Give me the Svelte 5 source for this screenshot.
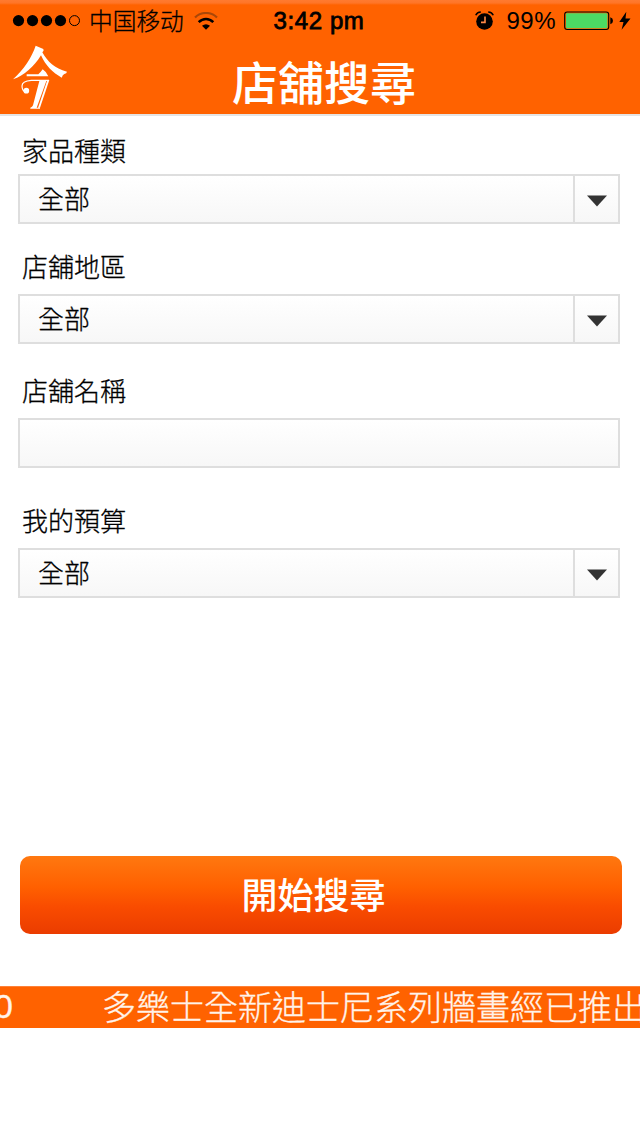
<script>
  const fields = [
    { label: '家品種類', value: '全部', select: true },
    { label: '店舖地區', value: '全部', select: true },
    { label: '店舖名稱', value: '', select: false },
    { label: '我的預算', value: '全部', select: true }
  ];
</script>

<div class="screen">
  <header>
    <div class="status">
      <div class="left">
        <svg class="dots" width="70" height="14" viewBox="0 0 70 14">
          <circle cx="6.5" cy="6.6" r="5.6" /><circle cx="20.5" cy="6.6" r="5.6" />
          <circle cx="34.5" cy="6.6" r="5.6" /><circle cx="48.5" cy="6.6" r="5.6" />
          <circle cx="62.5" cy="6.6" r="5" fill="none" stroke="#000" />
        </svg>
        <span class="carrier">中国移动</span>
        <svg class="wifi" width="24" height="19" viewBox="0 0 24 19" fill="none">
          <path d="M1 5.5C7-.5 17-.5 23 5.5" stroke="#a94708" stroke-width="2.2" />
          <path d="M4.7 10.2C9 5.8 15 5.8 19.3 10.2" stroke="#000" stroke-width="2.5" />
          <path d="M12 17.7L8 13.8Q12 10.8 16 13.8Z" fill="#000" />
        </svg>
      </div>
      <span class="time">3:42 pm</span>
      <div class="right">
        <svg class="alarm" width="20" height="20" viewBox="0 0 20 20">
          <circle cx="9.5" cy="10.5" r="8.3" />
          <path d="M.8 4.3Q2 1.3 5.8 1M18.2 4.3Q17 1.3 13.2 1" fill="none" stroke="#000" stroke-width="1.6" />
          <path d="M10 5.6V11.4H6" fill="none" stroke="#ff8a48" stroke-width="1.6" />
        </svg>
        <span class="percent">99%</span>
        <svg class="battery" width="50" height="20" viewBox="0 0 50 20">
          <rect x=".7" y="1" width="44" height="17.5" rx="2.5" fill="none" stroke="#000" stroke-width="1.1" />
          <rect x="2" y="2.3" width="41.4" height="15" rx="1" fill="#4cd964" />
          <path d="M46.3 6.2Q49 7 49 9.7T46.3 13.3Z" />
        </svg>
        <svg class="bolt" width="12" height="20" viewBox="0 0 12 20"><path d="M7.3.8L.3 11H4.5L2.6 18.7L11.5 7.5H6.5Z" /></svg>
      </div>
    </div>
    <div class="nav">
      <svg class="logo" width="56" height="65" viewBox="36 16 168 195">
        <g fill="#fff">
          <path d="M107 18L130 28Q133 33 127 38C143 66 163 87 201 96Q200 102 193 103Q188 105 185 114C158 99 137 78 123 47C102 81 73 108 39 119C72 88 95 54 107 18Z" />
          <path d="M80 104H115Q121 99 128 89Q139 96 145 110H80Z" />
          <path d="M118 124H139L110 204H120V207H91V204Q97 202 99 197Z" />
          <path d="M148 121L120 204L114 205L142 121Z" />
          <circle cx="79" cy="153" r="8.5" />
        </g>
        <path d="M147 122H94Q66 124 66 139Q66 153 77 158" fill="none" stroke="#fff" stroke-width="3.5" />
      </svg>
      <h1>店舖搜尋</h1>
    </div>
  </header>

  <main>
    {#each fields as field}
      <div class="field">
        <span class="label">{field.label}</span>
        <div class="box">
          <span class="value">{field.value}</span>
          {#if field.select}
            <span class="toggle">
              <svg width="20" height="12" viewBox="0 0 20 12"><path d="M0 .5H20L10 11.5Z" fill="#333" /></svg>
            </span>
          {/if}
        </div>
      </div>
    {/each}
  </main>

  <button>開始搜尋</button>
  <div class="ticker"><span class="digit">0</span><span>多樂士全新迪士尼系列牆畫經已推出</span></div>
</div>

<style>
  :global(body) { margin: 0; background: #fff; }
  .screen {
    width: 640px; height: 1136px; overflow: hidden; background: #fff; color: #000;
    font-family: "Liberation Sans", "Noto Sans CJK TC", sans-serif;
    display: flex; flex-direction: column;
  }
  header {
    height: 114px; flex: none; border-bottom: 2px solid #e4e4e4;
    background: linear-gradient(#ff7a30, #ff7527 3px, #ff6200 5px);
  }
  .status { height: 40px; display: grid; grid-template-columns: 1fr auto 1fr; align-items: center; }
  .status .left { display: flex; align-items: center; padding-left: 12px; }
  .carrier { font: 300 23.7px/38px "Noto Sans CJK SC", sans-serif; -webkit-text-stroke: .3px; margin: 0 0 2px 7px; width: 96px; }
  .wifi { margin-left: 9px; }
  .time { font-size: 24px; line-height: 42px; letter-spacing: .6px; -webkit-text-stroke: .8px; margin: 0 1px 0 -1px; }
  .status .right { display: flex; align-items: center; justify-content: flex-end; padding-right: 9px; }
  .percent { font-size: 24px; line-height: 42px; margin: 0 8px 0 11px; letter-spacing: .5px; }
  .bolt { margin-left: 5px; }
  .nav { height: 74px; display: grid; grid-template-columns: 68px 1fr 60px; align-items: start; }
  .logo { margin: 5px 0 0 12px; }
  h1 {
    margin: 6px 0 0; color: #fff; text-align: center;
    font: 500 46px/68px "Noto Sans CJK TC", sans-serif;
  }
  main { height: 482px; flex: none; padding: 0 20px 0 18px; }
  .field { display: flex; flex-direction: column; }
  .field:nth-child(1) { padding-top: 16px; }
  .field:nth-child(2) { padding-top: 24px; }
  .field:nth-child(3) { padding-top: 28px; }
  .field:nth-child(4) { padding-top: 34px; }
  .label {
    padding-left: 4px; height: 42px;
    font: 300 26px/36px "Noto Sans CJK TC", sans-serif; -webkit-text-stroke: .3px;
  }
  .field:nth-child(2) .label { height: 46px; }
  .field:nth-child(3) .label { height: 46px; }
  .field:nth-child(4) .label { height: 46px; }
  .box {
    height: 50px; box-sizing: border-box; border: 2px solid #dedede;
    background: linear-gradient(#fff, #f7f7f7); display: flex;
  }
  .value { flex: 1; padding-left: 18px; font: 300 26px/43px "Noto Sans CJK TC", sans-serif; -webkit-text-stroke: .3px; }
  .toggle {
    width: 45px; border-left: 2px solid #dedede;
    display: flex; align-items: center; justify-content: center; padding: 3px 0 0 1px; box-sizing: border-box;
  }
  button {
    flex: none; margin: 258px 18px 0 20px; height: 78px; border: 0; padding: 0 15px 4px 0; border-radius: 10px;
    background: linear-gradient(#ff7810, #ff6000 40%, #f94c00 65%, #eb3c00);
    color: #fff; font: 500 36px/74px "Noto Sans CJK TC", sans-serif;
  }
  .ticker {
    flex: none; margin-top: 52px; height: 42px; background: #ff6200; border-top: 1px solid #ff8138; box-sizing: border-box;
    color: #fff3ea; font: 300 34px/37px "Noto Sans CJK TC", sans-serif; -webkit-text-stroke: .3px;
    white-space: nowrap; overflow: hidden; display: flex;
  }
  .digit { flex: none; width: 108px; margin-left: -6px; font-family: "Liberation Sans", sans-serif; line-height: 39px; }
</style>
